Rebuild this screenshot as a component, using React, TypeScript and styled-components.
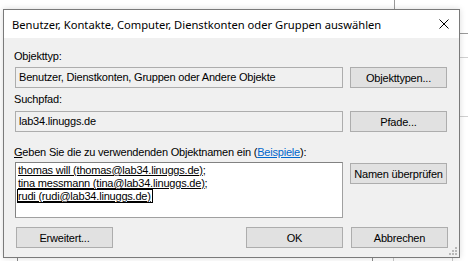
import styled, { createGlobalStyle } from "styled-components";

const GlobalStyle = createGlobalStyle`
 html, body {
  margin: 0;
  padding: 0;
  background: #ffffff;
 }
 body {
  font-family: "Liberation Sans", Arial, sans-serif;
  font-size: 11px;
  letter-spacing: -0.2px;
  color: #000000;
 }
`;

const Desktop = styled.div`
 position: relative;
 width: 468px;
 height: 261px;
 overflow: hidden;
 padding: 9px 0 0 3px;
 box-sizing: border-box;
 background: #ffffff;
`;

// windows lying behind the dialog, only their edges show
const BackWindow = styled.div<{ $l: number; $t: number; $w: number; $h: number; $c?: string }>`
 position: absolute;
 left: ${(p) => p.$l}px;
 top: ${(p) => p.$t}px;
 width: ${(p) => p.$w}px;
 height: ${(p) => p.$h}px;
 border: 1px solid ${(p) => p.$c ?? "#a0a0a0"};
 box-sizing: border-box;
`;

const Dialog = styled.div`
 position: relative;
 width: 457px;
 height: 249px;
 border: 1px solid #7a7a7a;
 box-sizing: border-box;
 background: #f0f0f0;
 display: flex;
 flex-direction: column;
 box-shadow: 0 0 6px rgba(0, 0, 0, 0.15);
`;

const TitleBar = styled.div`
 height: 28px;
 background: #ffffff;
 display: flex;
 align-items: center;
 justify-content: space-between;
 padding: 0 10px 0 8px;
 font-family: "Noto Sans", "Open Sans", sans-serif;
 font-size: 11.2px;
 letter-spacing: 0;
 color: #000000;
`;

const Title = styled.span`
 white-space: nowrap;
`;

const Body = styled.div`
 flex: 1;
 display: flex;
 flex-direction: column;
 padding: 12px 11px 0 11px;
`;

const Label = styled.div<{ $top: number; $gap: number }>`
 height: 13px;
 line-height: 13px;
 margin-top: ${(p) => p.$top}px;
 margin-bottom: ${(p) => p.$gap}px;
 margin-left: -1px;
 white-space: nowrap;
`;

const Row = styled.div`
 display: grid;
 grid-template-columns: 328px 97px;
 column-gap: 7px;
 align-items: start;
`;

const Field = styled.div`
 height: 21px;
 box-sizing: border-box;
 border: 1px solid #adadad;
 background: #f0f0f0;
 padding: 0 3px;
 line-height: 19px;
 white-space: nowrap;
 overflow: hidden;
`;

const NameBox = styled.div`
 height: 56px;
 box-sizing: border-box;
 border: 1px solid #a0a0a0;
 border-top-color: #828282;
 border-left-color: #828282;
 background: #ffffff;
 padding: 1px 2px;
 line-height: 13px;
`;

const NameLine = styled.div`
 height: 13px;
 white-space: nowrap;
`;

const Resolved = styled.span<{ $focus?: boolean }>`
 text-decoration: underline;
 outline: ${(p) => (p.$focus ? "1px solid #000000" : "none")};
 outline-offset: 0;
 padding-right: ${(p) => (p.$focus ? "1px" : "0")};
`;

const Button = styled.button<{ $offset?: number }>`
 height: 21px;
 width: 97px;
 box-sizing: border-box;
 margin-top: ${(p) => p.$offset ?? 0}px;
 border: 1px solid #adadad;
 background: #e1e1e1;
 font-family: "Liberation Sans", Arial, sans-serif;
 font-size: 11px;
 letter-spacing: -0.2px;
 color: #000000;
 padding: 0;
 white-space: nowrap;
`;

const ButtonRow = styled.div`
 display: flex;
 align-items: center;
 gap: 8px;
 margin-top: 9px;
 padding-left: 1px;
`;

const Spacer = styled.div`
 flex: 1;
`;

const Link = styled.span`
 color: #0066cc;
 text-decoration: underline;
`;

const AccessKey = styled.span`
 text-decoration: underline;
`;

const Grip = styled.svg`
 position: absolute;
 right: 2px;
 bottom: 2px;
`;

const CloseIcon = () => (
 <svg width="10" height="10" viewBox="0 0 10 10">
  <path d="M0.5 0.5 L9.5 9.5 M9.5 0.5 L0.5 9.5" stroke="#000000" strokeWidth="1" fill="none" />
 </svg>
);

const names = [
 { name: "thomas will (thomas@lab34.linuggs.de)", sep: ";" },
 { name: "tina messmann (tina@lab34.linuggs.de)", sep: ";" },
 { name: "rudi (rudi@lab34.linuggs.de)", sep: "", focus: true },
];

export default function App() {
 return (
  <Desktop>
   <GlobalStyle />
   <BackWindow $l={394} $t={-20} $w={120} $h={54} $c="#9a9a9a" />
   <BackWindow $l={440} $t={57} $w={60} $h={60} $c="#d0d0d0" />
   <BackWindow $l={17} $t={256} $w={356} $h={20} $c="#8a8a8a" />
   <BackWindow $l={393} $t={256} $w={60} $h={20} $c="#c8c8c8" />
   <Dialog>
    <TitleBar>
     <Title>Benutzer, Kontakte, Computer, Dienstkonten oder Gruppen auswählen</Title>
     <CloseIcon />
    </TitleBar>
    <Body>
     <Label $top={0} $gap={4}>Objekttyp:</Label>
     <Row>
      <Field>Benutzer, Dienstkonten, Gruppen oder Andere Objekte</Field>
      <Button>Objekttypen...</Button>
     </Row>
     <Label $top={5} $gap={5}>Suchpfad:</Label>
     <Row>
      <Field>lab34.linuggs.de</Field>
      <Button>Pfade...</Button>
     </Row>
     <Label $top={14} $gap={3}>
      <AccessKey>G</AccessKey>eben Sie die zu verwendenden Objektnamen ein (<Link>Beispiele</Link>):
     </Label>
     <Row>
      <NameBox>
       {names.map((n) => (
        <NameLine key={n.name}>
         <Resolved $focus={n.focus}>{n.name}</Resolved>
         {n.sep}
        </NameLine>
       ))}
      </NameBox>
      <Button $offset={1}>Namen überprüfen</Button>
     </Row>
     <ButtonRow>
      <Button>Erweitert...</Button>
      <Spacer />
      <Button>OK</Button>
      <Button>Abbrechen</Button>
     </ButtonRow>
    </Body>
    <Grip width="8" height="8" viewBox="0 0 8 8">
     {[
      [6, 0],
      [6, 3],
      [3, 3],
      [6, 6],
      [3, 6],
      [0, 6],
     ].map(([x, y]) => (
      <rect key={`${x}-${y}`} x={x} y={y} width="2" height="2" fill="#b8b8b8" />
     ))}
    </Grip>
   </Dialog>
  </Desktop>
 );
}
